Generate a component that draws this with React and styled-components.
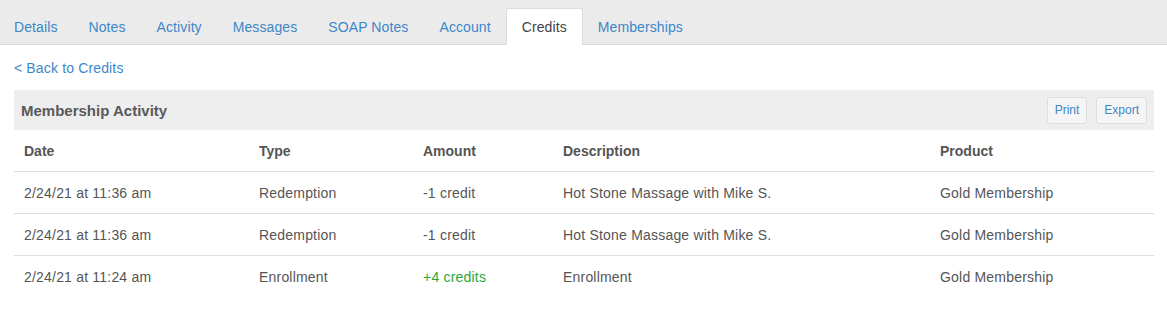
import React from 'react';
import styled, { createGlobalStyle } from 'styled-components';


// global
const GlobalStyle = createGlobalStyle`
  body {
    margin: 0;
    background: #fff;
    font-family: "Liberation Sans", Arial, sans-serif;
    color: #555;
  }
`

// data
const tabs = ['Details', 'Notes', 'Activity', 'Messages', 'SOAP Notes', 'Account', 'Credits', 'Memberships'];

const rows = [
  { date: '2/24/21 at 11:36 am', type: 'Redemption', amount: '-1 credit', positive: false, description: 'Hot Stone Massage with Mike S.', product: 'Gold Membership' },
  { date: '2/24/21 at 11:36 am', type: 'Redemption', amount: '-1 credit', positive: false, description: 'Hot Stone Massage with Mike S.', product: 'Gold Membership' },
  { date: '2/24/21 at 11:24 am', type: 'Enrollment', amount: '+4 credits', positive: true, description: 'Enrollment', product: 'Gold Membership' },
];


// styled-components
const TabBar = styled.div`
  background: #ebebeb;
  border-bottom: 1px solid #dcdcdc;
  height: 44px;
  box-sizing: content-box;
`

const TabList = styled.ul`
  list-style: none;
  display: flex;
  margin: 0 0 0 -2px;
  padding: 8px 0 0 0;
  height: 36px;
`

const Tab = styled.li`
  display: flex;
  align-items: center;
  height: 37px;
  padding: 0 15px 1px;
  margin-right: -1px;
  border: 1px solid ${p => (p.$active ? '#dcdcdc' : 'transparent')};
  border-bottom: none;
  border-radius: 3px 3px 0 0;
  background: ${p => (p.$active ? '#fff' : 'transparent')};
  color: ${p => (p.$active ? '#444' : '#3d87c9')};
  font-size: 14px;
  letter-spacing: 0.1px;
  box-sizing: border-box;
  position: relative;
  z-index: 1;
`

const Content = styled.div`
  padding: 13px 13px 0 14px;
`

const BackLink = styled.a`
  display: block;
  font-size: 14px;
  line-height: 20px;
  letter-spacing: 0.15px;
  color: #3d87c9;
  text-decoration: none;
  margin-bottom: 12px;
`

const PanelHeader = styled.div`
  display: flex;
  align-items: center;
  justify-content: space-between;
  height: 40px;
  padding: 0 7px;
  background: #eeeeee;
`

const PanelTitle = styled.h3`
  margin: 0;
  font-size: 15px;
  font-weight: 600;
  color: #595959;
`

const Actions = styled.div`
  display: flex;
  gap: 9px;
`

const Button = styled.button`
  height: 27px;
  padding: 0 7px;
  font-family: inherit;
  font-size: 12px;
  color: #3d87c9;
  background: #f5f5f5;
  border: 1px solid #dddddd;
  border-radius: 3px;
`

const Row = styled.div`
  display: grid;
  grid-template-columns: 235px 164px 140px 377px 1fr;
  height: 42px;
  align-items: center;
  border-bottom: 1px solid ${p => (p.$last ? 'transparent' : '#dddddd')};
  box-sizing: border-box;
`

const Cell = styled.div`
  padding-left: 10px;
  font-size: 14px;
  letter-spacing: ${p => (p.$head ? '0' : '0.2px')};
  font-weight: ${p => (p.$head ? 700 : 400)};
  color: ${p => (p.$positive ? '#29a83a' : '#555')};
`


// components
const App = () => {
  return (
    <>
      <GlobalStyle />
      <TabBar>
        <TabList>
          {tabs.map(t => (
            <Tab key={t} $active={t === 'Credits'}>{t}</Tab>
          ))}
        </TabList>
      </TabBar>
      <Content>
        <BackLink href="#">&lt; Back to Credits</BackLink>
        <PanelHeader>
          <PanelTitle>Membership Activity</PanelTitle>
          <Actions>
            <Button>Print</Button>
            <Button>Export</Button>
          </Actions>
        </PanelHeader>
        <Row>
          <Cell $head>Date</Cell>
          <Cell $head>Type</Cell>
          <Cell $head>Amount</Cell>
          <Cell $head>Description</Cell>
          <Cell $head>Product</Cell>
        </Row>
        {rows.map((r, i) => (
          <Row key={i} $last={i === rows.length - 1}>
            <Cell>{r.date}</Cell>
            <Cell>{r.type}</Cell>
            <Cell $positive={r.positive}>{r.amount}</Cell>
            <Cell>{r.description}</Cell>
            <Cell>{r.product}</Cell>
          </Row>
        ))}
      </Content>
    </>
  );
}


export default App;
